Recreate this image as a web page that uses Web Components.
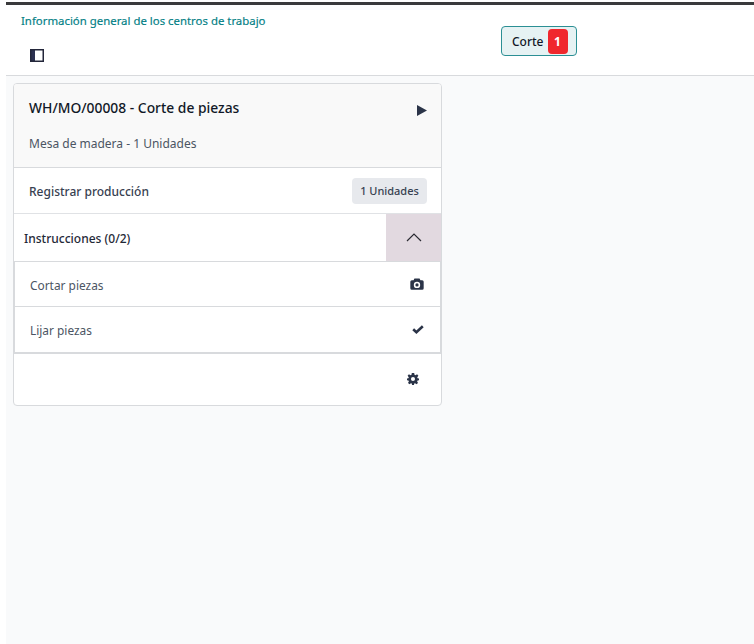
<!DOCTYPE html>
<html lang="es">
<head>
<meta charset="utf-8">
<title>Centros de trabajo</title>
<style>
    html, body { margin: 0; height: 100%; background: #fff; }
    body { font-family: "Noto Sans", sans-serif; font-size: 12px; color: #374151; overflow: hidden; }
</style>
</head>
<body>
<mrp-app></mrp-app>

<template id="mrp-app-template">
<style>
    :host { display: flex; flex-direction: column; height: 644px; margin-left: 6px; padding-top: 2px; box-sizing: border-box; }
    #topline { height: 3px; background: #3a3a3c; flex: none; }
    main { flex: 1; background: #f9fafb; padding: 7px 0 0 7px; }
</style>
<div id="topline"></div>
<mrp-header></mrp-header>
<main>
    <mrp-card></mrp-card>
</main>
</template>

<template id="mrp-header-template">
<style>
    :host { display: block; height: 71px; box-sizing: border-box; background: #fff; border-bottom: 1px solid #d8dadd; }
    #row { display: grid; grid-template-columns: 495px auto; height: 100%; }
    #left { display: flex; flex-direction: column; padding: 7px 0 0 15px; }
    #title { font-size: 11.4px; line-height: 18px; color: #017e84; -webkit-text-stroke: 0.15px #017e84; }
    #toggle { margin: 19px 0 0 9px; width: 14px; height: 13px; }
    #right { padding-top: 21px; }
    #tab { display: flex; align-items: center; width: 76px; height: 30px; box-sizing: border-box; border: 1px solid #2b8f94; border-radius: 4px; background: #e6f2f3; padding-left: 10px; font-size: 12px; font-weight: 500; color: #111827; }
    #badge { margin-left: 4px; width: 20px; height: 25px; border-radius: 4px; background: #f0272d; color: #fff; font-weight: 700; font-size: 12px; display: flex; align-items: center; justify-content: center; }
</style>
<div id="row">
    <div id="left">
        <div id="title">Información general de los centros de trabajo</div>
        <svg id="toggle" viewBox="0 0 14 13">
            <rect x="0" y="0" width="5" height="13" fill="#2b3050"/>
            <rect x="0.75" y="0.75" width="12.5" height="11.5" fill="none" stroke="#23263a" stroke-width="1.5"/>
        </svg>
    </div>
    <div id="right">
        <div id="tab">Corte<span id="badge">1</span></div>
    </div>
</div>
</template>

<template id="mrp-card-template">
<style>
    :host { display: block; width: 429px; box-sizing: border-box; background: #fff; border: 1px solid #d8dadd; border-radius: 4px; overflow: hidden; }
    #head { height: 84px; box-sizing: border-box; background: #f9f9f9; border-bottom: 1px solid #d8dadd; padding: 14px 15px 0; position: relative; }
    #name { font-size: 13.85px; line-height: 20px; font-weight: 500; color: #111827; }
    #sub { font-size: 12px; line-height: 18px; margin-top: 17px; color: #4b5563; }
    #play { position: absolute; right: 14px; top: 21px; width: 10px; height: 11px; }
    #register { height: 46px; box-sizing: border-box; display: flex; align-items: center; justify-content: space-between; padding: 0 14px 0 15px; border-bottom: 1px solid #e0e2e5; font-size: 12px; font-weight: 500; color: #374151; }
    #register > span:first-child { padding-top: 2px; }
    #qty { background: #e7e9ed; border-radius: 4px; height: 26px; width: 75px; display: flex; align-items: center; justify-content: center; font-size: 11px; font-weight: 500; color: #374151; }
    #steps-head { height: 47px; box-sizing: border-box; display: flex; align-items: center; justify-content: space-between; padding-left: 10px; font-size: 12px; font-weight: 500; color: #1f2937; }
    #steps-head > span { padding-top: 2px; }
    #collapse { width: 55px; height: 47px; background: #e2d9e0; display: flex; align-items: center; justify-content: center; padding-bottom: 2px; box-sizing: border-box; }
    #collapse svg { width: 16px; height: 10px; }
    #steps { border: solid #d8dadd; border-width: 1px 1px 2px 1px; }
    #footer { height: 51px; box-sizing: border-box; display: flex; align-items: center; justify-content: flex-end; padding: 0 22px 2px 0; }
    #footer svg { width: 12px; height: 12px; }
</style>
<div id="head">
    <div id="name">WH/MO/00008 - Corte de piezas</div>
    <div id="sub">Mesa de madera - 1 Unidades</div>
    <svg id="play" viewBox="0 0 10 11"><path d="M0 0 L10 5.5 L0 11 Z" fill="#2b3448"/></svg>
</div>
<div id="register">
    <span>Registrar producción</span>
    <span id="qty">1 Unidades</span>
</div>
<div id="steps-head">
    <span>Instrucciones (0/2)</span>
    <div id="collapse">
        <svg viewBox="0 0 16 10"><path d="M1 9 L8 2 L15 9" fill="none" stroke="#2b2b33" stroke-width="1.2"/></svg>
    </div>
</div>
<div id="steps">
    <mrp-step label="Cortar piezas">
        <svg viewBox="0 0 16 14" width="14" height="12" style="margin-right:1px"><path fill="#2b3448" fill-rule="evenodd" d="M5 0.5 L11 0.5 L12 2.5 L14 2.5 Q15.8 2.5 15.8 4.3 L15.8 12 Q15.8 13.8 14 13.8 L2 13.8 Q0.2 13.8 0.2 12 L0.2 4.3 Q0.2 2.5 2 2.5 L4 2.5 Z M8 4.4 A3.7 3.7 0 1 0 8 11.8 A3.7 3.7 0 1 0 8 4.4 Z M8 6.2 A1.9 1.9 0 1 1 8 10 A1.9 1.9 0 1 1 8 6.2 Z"/></svg>
    </mrp-step>
    <mrp-step label="Lijar piezas" last>
        <svg viewBox="0 0 12 9" width="12" height="9" style="margin-right:1px"><path d="M1.2 4.2 L4.4 7.2 L10.8 1.2" fill="none" stroke="#2b3448" stroke-width="2.6"/></svg>
    </mrp-step>
</div>
<div id="footer">
    <svg viewBox="0 0 16 16"><path fill="#2b3448" fill-rule="evenodd" d="M6.4 0 H9.6 L10 2.3 L11.4 2.9 L13.4 1.6 L15.2 3.8 L13.6 5.5 L14.1 6.9 L16 7.2 V9.6 L14.1 10 L13.5 11.3 L14.7 13.2 L12.5 15 L10.8 13.6 L9.6 14 L9.3 16 H6.7 L6.4 14 L5.2 13.6 L3.5 15 L1.3 13.2 L2.5 11.3 L1.9 10 L0 9.6 V7.2 L1.9 6.9 L2.4 5.5 L0.8 3.8 L2.6 1.6 L4.6 2.9 L6 2.3 Z M8 5.3 A2.7 2.7 0 1 0 8 10.7 A2.7 2.7 0 1 0 8 5.3 Z"/></svg>
</div>
</template>

<template id="mrp-step-template">
<style>
    :host { display: flex; height: 45px; box-sizing: border-box; align-items: center; justify-content: space-between; padding: 0 15px; font-size: 11.9px; color: #4b5563; background: #fff; border-bottom: 1px solid #d8dadd; }
    :host([last]) { border-bottom: none; }
    :host(:not([last])) #label { padding-top: 2px; }
    ::slotted(svg) { display: block; }
</style>
<span id="label"></span>
<slot></slot>
</template>

<script>
    class BaseElement extends HTMLElement
    {
        constructor(templateId)
        {
            super();
            this.attachShadow({mode: 'open'});
            this.shadowRoot.appendChild(document.getElementById(templateId).content.cloneNode(true));
        }
    }

    class MrpApp extends BaseElement { constructor() { super('mrp-app-template'); } }
    class MrpHeader extends BaseElement { constructor() { super('mrp-header-template'); } }
    class MrpCard extends BaseElement { constructor() { super('mrp-card-template'); } }

    class MrpStep extends BaseElement
    {
        constructor() { super('mrp-step-template'); }

        connectedCallback()
        {
            this.shadowRoot.querySelector('#label').textContent = this.getAttribute('label');
        }
    }

    customElements.define('mrp-header', MrpHeader);
    customElements.define('mrp-step', MrpStep);
    customElements.define('mrp-card', MrpCard);
    customElements.define('mrp-app', MrpApp);
</script>
</body>
</html>
